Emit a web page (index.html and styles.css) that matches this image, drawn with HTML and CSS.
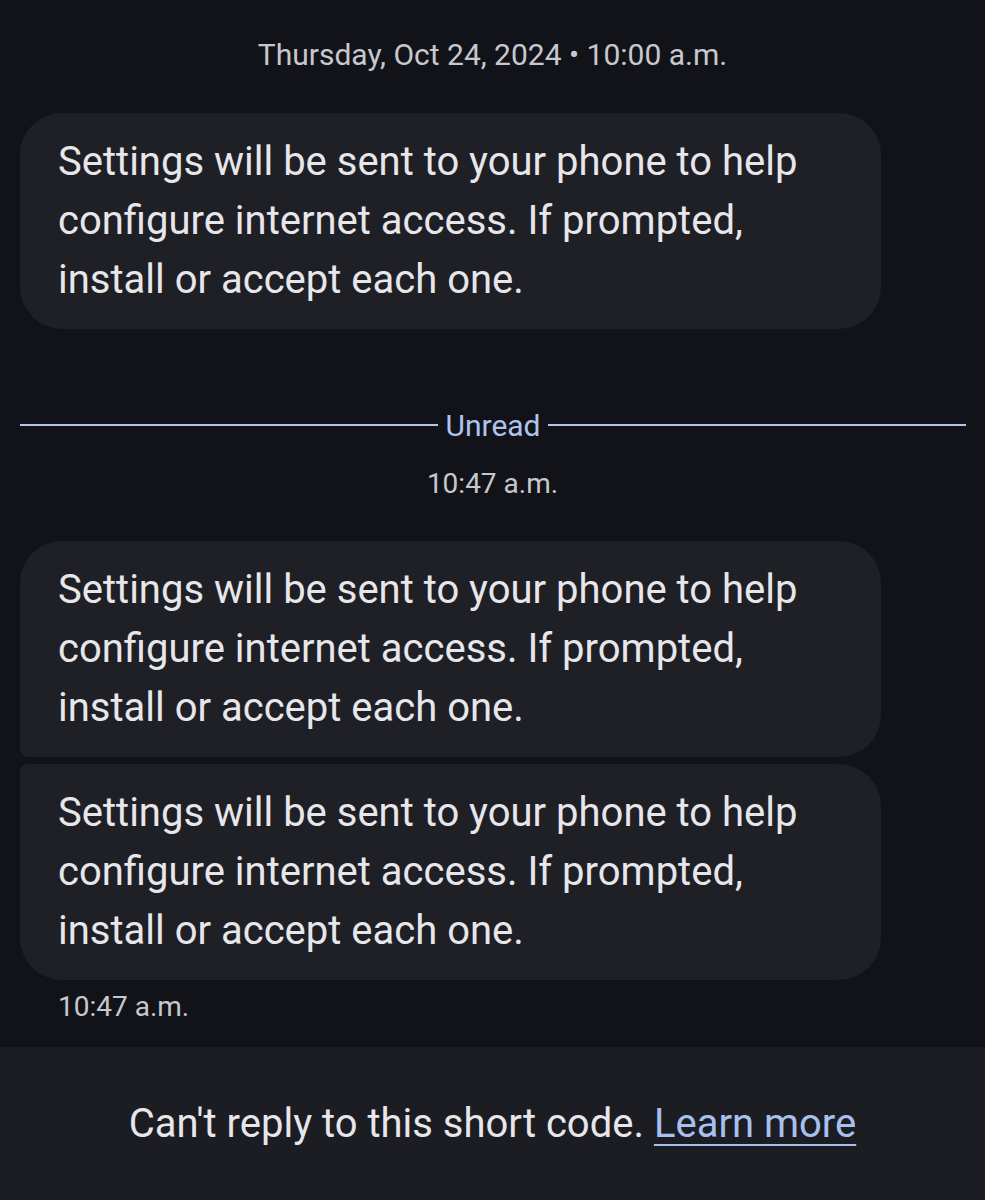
FILE: index.html
```html
<!DOCTYPE html>
<html>
<head>
<meta charset="utf-8">
<link rel="stylesheet" href="styles.css">
</head>
<body>
<div class="thread">
  <div class="stamp stamp-top">Thursday, Oct 24, 2024 • 10:00 a.m.</div>
  <div class="bubble bubble-single">Settings will be sent to your phone to help<br>configure internet access. If prompted,<br>install or accept each one.</div>
  <div class="divider"><span class="line"></span><span class="divider-label">Unread</span><span class="line"></span></div>
  <div class="stamp stamp-mid">10:47 a.m.</div>
  <div class="group">
    <div class="bubble bubble-first">Settings will be sent to your phone to help<br>configure internet access. If prompted,<br>install or accept each one.</div>
    <div class="bubble bubble-last">Settings will be sent to your phone to help<br>configure internet access. If prompted,<br>install or accept each one.</div>
  </div>
  <div class="msg-time">10:47 a.m.</div>
</div>
<div class="footer">
  <p class="footer-text">Can't reply to this short code. <a class="learn" href="#">Learn more</a></p>
</div>
</body>
</html>
```

FILE: styles.css
```css
html, body {
  margin: 0;
  padding: 0;
  background: #121318;
}
body {
  width: 985px;
  height: 1200px;
  overflow: hidden;
  font-family: Roboto, "Open Sans", sans-serif;
  color: #e3e3e8;
  display: flex;
  flex-direction: column;
}
.thread {
  flex: 1;
  display: flex;
  flex-direction: column;
}
.stamp {
  text-align: center;
  font-size: 30px;
  line-height: 34px;
  color: #c7c8ce;
}
.stamp-top {
  margin-top: 38px;
}
.bubble {
  box-sizing: border-box;
  width: 861px;
  margin-left: 20px;
  padding: 19px 20px 20px 38px;
  background: #1f2025;
  font-size: 40px;
  line-height: 59px;
  color: #e6e6eb;
  border-radius: 42px;
}
.bubble-single {
  margin-top: 41px;
}
.group {
  display: flex;
  flex-direction: column;
  gap: 7px;
  margin-top: 40px;
}
.bubble-first {
  border-bottom-left-radius: 8px;
}
.bubble-last {
  border-top-left-radius: 8px;
}
.divider {
  margin-top: 81px;
  padding: 0 19px 0 20px;
  display: flex;
  align-items: center;
  gap: 7px;
  height: 30px;
}
.line {
  flex: 1;
  height: 2px;
  background: #b4c4ea;
}
.divider-label {
  font-size: 30px;
  color: #b0c3ef;
}
.stamp-mid {
  margin-top: 27px;
  font-size: 28px;
}
.msg-time {
  margin-top: 13px;
  margin-left: 58px;
  font-size: 28px;
  line-height: 28px;
  color: #c7c8ce;
}
.footer {
  height: 153px;
  background: #1c1d22;
  display: flex;
  align-items: center;
  justify-content: center;
}
.footer-text {
  margin: 0;
  font-size: 40px;
  line-height: 44px;
  color: #e6e6eb;
}
.learn {
  color: #a8c0f0;
  text-decoration: underline;
  text-decoration-thickness: 2px;
  text-underline-offset: 7px;
}
```
